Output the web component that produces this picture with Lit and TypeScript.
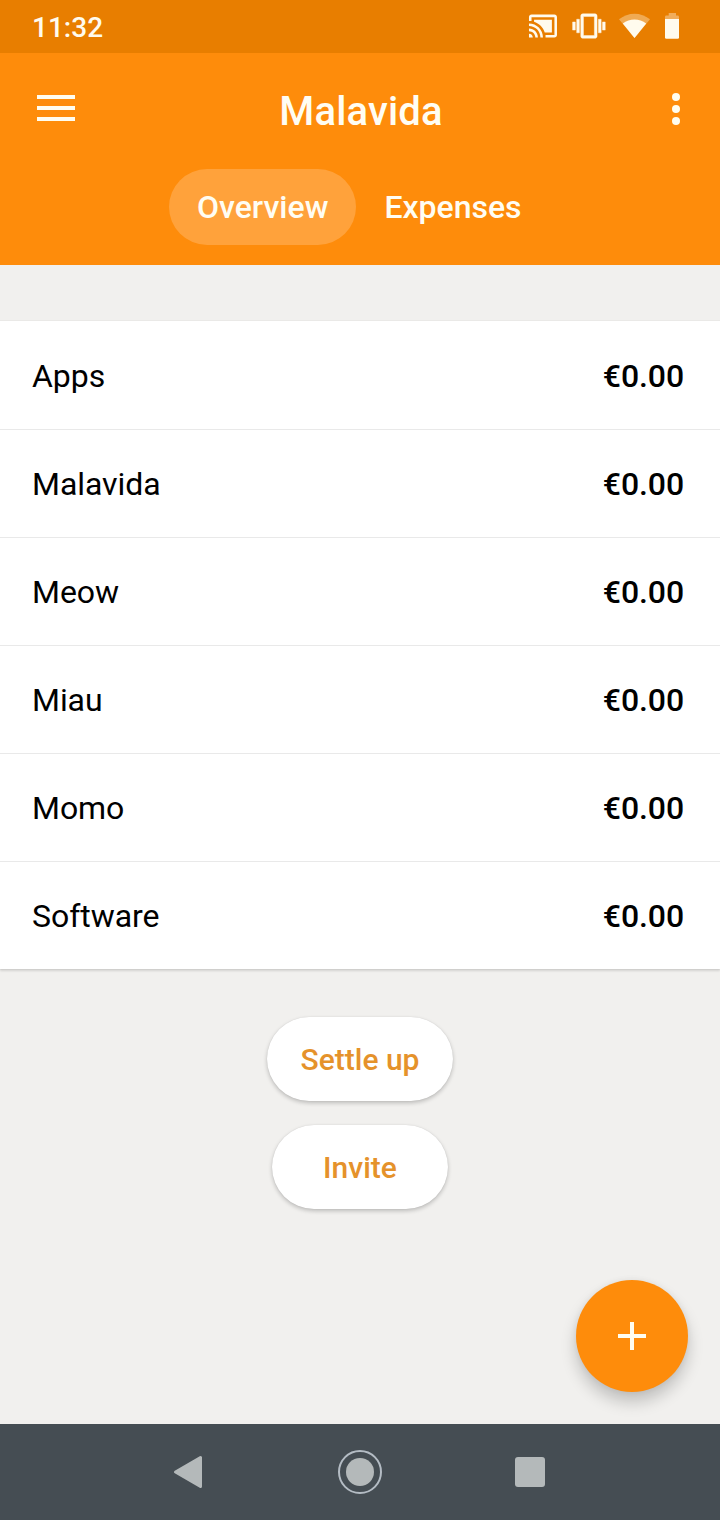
import { LitElement, html, css } from "lit";
import { customElement, state } from "lit/decorators.js";
import { classMap } from "lit/directives/class-map.js";

interface Member {
  name: string;
  balance: string;
}

@customElement("status-bar")
class StatusBar extends LitElement {
  static styles = css`
    :host {
      display: flex;
      align-items: center;
      justify-content: space-between;
      box-sizing: border-box;
      height: 53px;
      padding: 0 40px 0 32px;
      background: #e87e00;
      color: #fffbee;
    }
    .time {
      padding-top: 2px;
      font-size: 28px;
      font-weight: 500;
      line-height: 53px;
    }
    .icons {
      display: flex;
    }
    svg {
      display: block;
      fill: #fffbee;
    }
  `;

  render() {
    return html`
      <span class="time">11:32</span>
      <div class="icons">
        <svg width="152" height="53" viewBox="528 0 152 53">
          <path
            transform="translate(527.7 10.8) scale(1.273)"
            d="M1 18v3h3c0-1.66-1.34-3-3-3zm0-4v2c2.76 0 5 2.24 5 5h2c0-3.87-3.13-7-7-7zm18-7H5v1.63c3.96 1.28 7.09 4.41 8.37 8.37H19V7zM1 10v2c4.97 0 9 4.03 9 9h2c0-6.08-4.93-11-11-11zm20-7H3c-1.1 0-2 .9-2 2v3h2V5h18v14h-7v2h7c1.1 0 2-.9 2-2V5c0-1.1-.9-2-2-2z"
          />
          <path
            transform="translate(572.6 9.7) scale(1.36)"
            stroke="#fffbee"
            stroke-width=".3"
            d="M0 15h2V9H0v6zm3 2h2V7H3v10zm19-8v6h2V9h-2zm-3 8h2V7h-2v10zM16.500 3h-9C6.670 3 6 3.670 6 4.500v15c0 .83.67 1.500 1.500 1.500h9c.83 0 1.500-.67 1.500-1.500v-15c0-.83-.67-1.500-1.500-1.500zM16 19H8V5h8v14z"
          />
          <path opacity=".35" d="M634.500 38L619 19.300C623.500 15.700 629 13.700 634.500 13.700S645.500 15.700 650 19.300z" />
          <path d="M634.500 38L622.800 23.600C626.200 21 630.300 19.600 634.500 19.600S642.800 21 646.200 23.600z" />
          <path opacity=".38" d="M668.700 13h7.300v2.600h1.700q1.300 0 1.300 1.300V19h-14v-2.100q0-1.300 1.300-1.300h2.400z" />
          <path d="M665 19h14v18.500q0 1.300-1.300 1.300h-11.400q-1.300 0-1.300-1.300z" />
        </svg>
      </div>
    `;
  }
}

@customElement("group-header")
class GroupHeader extends LitElement {
  static styles = css`
    :host {
      display: block;
      box-sizing: border-box;
      height: 212px;
      background: #fe8c0b;
      color: #fffdf3;
    }
    .toolbar {
      display: grid;
      grid-template-columns: 38px 1fr 38px;
      align-items: center;
      height: 112px;
      padding: 0 35px 0 37px;
    }
    .title {
      margin: 6px 0 0;
      font-size: 40px;
      font-weight: 500;
      line-height: 48px;
      text-align: center;
      letter-spacing: 0.15px;
    }
    svg {
      display: block;
      fill: #fffdf0;
    }
    .more {
      justify-self: end;
    }
    .tabs {
      display: flex;
      padding: 4px 0 0 169px;
    }
    .tab {
      box-sizing: border-box;
      height: 76px;
      padding: 0 28px;
      border-radius: 38px;
      font-size: 32px;
      font-weight: 500;
      line-height: 77px;
      white-space: nowrap;
    }
    .active {
      background: #ffa23b;
    }
  `;

  @state() private selected = "Overview";

  render() {
    return html`
      <div class="toolbar">
        <svg width="38" height="28" viewBox="0 0 38 28">
          <path d="M0 0h38v4H0zM0 11h38v4H0zM0 22h38v4H0z" />
        </svg>
        <h1 class="title">Malavida</h1>
        <svg class="more" width="18" height="32" viewBox="0 0 18 32">
          <circle cx="9" cy="4" r="4" />
          <circle cx="9" cy="16" r="4" />
          <circle cx="9" cy="28" r="4" />
        </svg>
      </div>
      <nav class="tabs">
        ${["Overview", "Expenses"].map(
          (tab) => html`<a
            class=${classMap({ tab: true, active: tab === this.selected })}
            @click=${() => (this.selected = tab)}
            >${tab}</a
          >`
        )}
      </nav>
    `;
  }
}

@customElement("nav-bar")
class NavBar extends LitElement {
  static styles = css`
    :host {
      display: block;
      height: 96px;
      background: #454d53;
    }
    svg {
      display: block;
    }
  `;

  render() {
    return html`
      <svg width="720" height="96" viewBox="0 0 720 96" fill="#b4b9ba">
        <path d="M175.500 48L200.500 33.500V62.500z" stroke="#b4b9ba" stroke-width="3" stroke-linejoin="round" />
        <circle cx="360" cy="48" r="14" />
        <circle cx="360" cy="48" r="21" fill="none" stroke="#b4bcc4" stroke-width="2" />
        <rect x="515" y="33" width="30" height="30" rx="3" />
      </svg>
    `;
  }
}

@customElement("app-root")
class AppRoot extends LitElement {
  static styles = css`
    :host {
      display: flex;
      flex-direction: column;
      position: relative;
      box-sizing: border-box;
      width: 720px;
      height: 1520px;
      overflow: hidden;
      background: #f1f0ee;
      font-family: Roboto, sans-serif;
    }
    .content {
      flex: 1;
      padding-top: 56px;
    }
    .list {
      margin: 0;
      padding: 0;
      list-style: none;
      background: #fff;
      box-shadow: 0 0 1px rgba(0, 0, 0, 0.18), 0 2px 2px rgba(0, 0, 0, 0.12);
    }
    .row {
      display: flex;
      justify-content: space-between;
      box-sizing: border-box;
      height: 108px;
      padding: 1px 36px 0 32px;
      font-size: 32px;
      line-height: 108px;
      color: #000;
    }
    .row + .row {
      border-top: 1px solid #e9e9e9;
      padding-top: 0;
    }
    .name {
      letter-spacing: -0.05px;
    }
    .amount {
      font-weight: 500;
      letter-spacing: -0.1px;
    }
    .actions {
      display: flex;
      flex-direction: column;
      align-items: center;
      gap: 24px;
      padding-top: 48px;
    }
    .pill {
      box-sizing: border-box;
      min-width: 176px;
      height: 84px;
      margin: 0;
      padding: 0 34px;
      border: 0;
      border-radius: 42px;
      background: #fff;
      box-shadow: 0 0 1px rgba(0, 0, 0, 0.12), 0 2px 4px rgba(0, 0, 0, 0.22);
      color: #e5922b;
      font: 500 30px/86px Roboto, sans-serif;
    }
    .fab {
      position: absolute;
      right: 32px;
      bottom: 128px;
      display: grid;
      place-items: center;
      width: 112px;
      height: 112px;
      padding: 0;
      border: 0;
      border-radius: 50%;
      background: #fe8c0b;
      box-shadow: 0 10px 16px rgba(0, 0, 0, 0.2), 0 0 6px rgba(0, 0, 0, 0.06);
    }
  `;

  private members: Member[] = [
    { name: "Apps", balance: "€0.00" },
    { name: "Malavida", balance: "€0.00" },
    { name: "Meow", balance: "€0.00" },
    { name: "Miau", balance: "€0.00" },
    { name: "Momo", balance: "€0.00" },
    { name: "Software", balance: "€0.00" },
  ];

  render() {
    return html`
      <status-bar></status-bar>
      <group-header></group-header>
      <main class="content">
        <ul class="list">
          ${this.members.map(
            (m) => html`<li class="row">
              <span class="name">${m.name}</span><span class="amount">${m.balance}</span>
            </li>`
          )}
        </ul>
        <div class="actions">
          <button class="pill">Settle up</button>
          <button class="pill">Invite</button>
        </div>
      </main>
      <nav-bar></nav-bar>
      <button class="fab" aria-label="Add expense">
        <svg width="28" height="28" viewBox="0 0 28 28" fill="#fffdf0">
          <path d="M12 0h4v12h12v4H16v12h-4V16H0v-4h12z" />
        </svg>
      </button>
    `;
  }
}
